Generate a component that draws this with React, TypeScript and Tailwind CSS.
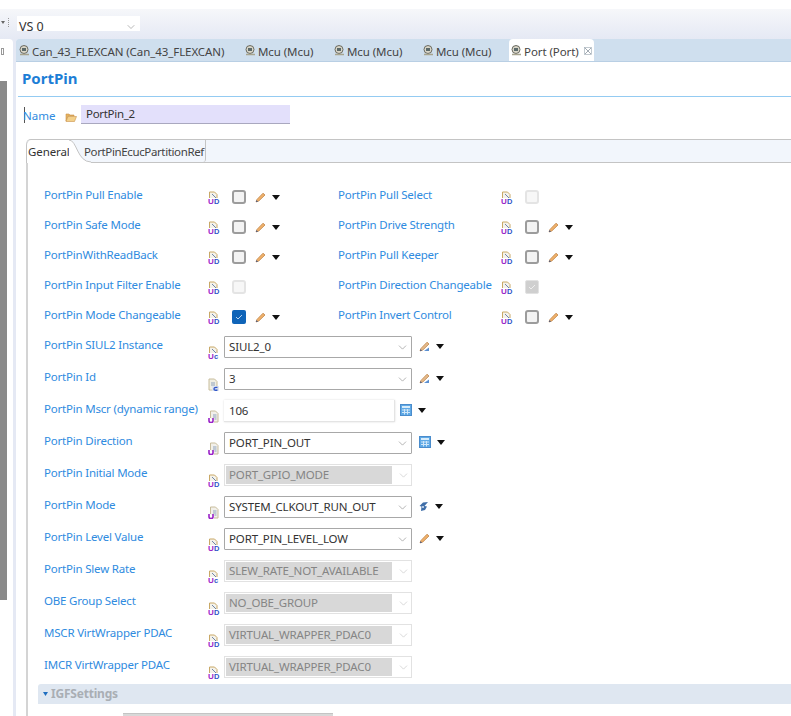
import React from 'react';
import {ChevronDown} from 'lucide-react';

const labelClass = "text-[11.5px] tracking-[-0.2px] leading-[16px] text-[#2f8be0] whitespace-nowrap";

function UdIcon({kind = 'UD'}: { kind?: string }) {
    return (
        <svg width="12" height="13" viewBox="0 0 12 13" className="shrink-0">
            <path d="M1.5 7 V1 H6.5 L9 3.5 V7" fill="#f4f2ea" stroke="#c9a866" strokeWidth="1"/>
            <path d="M4 3 L8 7" stroke="#6f86a8" strokeWidth="1"/>
            <text x="0" y="12.5" fontSize="8" fontWeight="700" fill="#9a22c8" fontFamily="Liberation Sans">{kind[0]}</text>
            <text x="6" y="12.5" fontSize="7.5" fontWeight="700" fill="#2f55c8" fontFamily="Liberation Sans">{kind[1]}</text>
        </svg>
    );
}

function PageIcon({tone = '#9a22c8'}: { tone?: string }) {
    return (
        <svg width="11" height="13" viewBox="0 0 11 13" className="shrink-0">
            <path d="M2.5 8 V1 H7.5 L10 3.5 V12 H6" fill="#f2f0ea" stroke="#c8bd9c" strokeWidth="1"/>
            <path d="M5 5 H8.5 M5 7 H8.5 M6.5 9 H8.5" stroke="#8da2bf" strokeWidth="1"/>
            <path d="M1 8 V11 Q1 12.5 3 12.5 Q5 12.5 5 11 V8" fill="none" stroke={tone} strokeWidth="1.6"/>
        </svg>
    );
}

function IdIcon() {
    return (
        <svg width="11" height="13" viewBox="0 0 11 13" className="shrink-0">
            <path d="M1 12 V1 H6.5 L9 3.5 V8" fill="#f0eee2" stroke="#c8bd9c" strokeWidth="1"/>
            <path d="M1 12 H6" stroke="#c8bd9c" strokeWidth="1"/>
            <path d="M3 5 H7 M3 7 H7" stroke="#8da2bf" strokeWidth="1"/>
            <rect x="4" y="8" width="7" height="5" fill="#dfe6f2"/>
            <path d="M9.5 9.5 Q6 9 6 11 Q6 12.8 9.5 12" fill="none" stroke="#2f55c8" strokeWidth="1.3"/>
        </svg>
    );
}

function Pencil({tint = false}: { tint?: boolean }) {
    return (
        <svg width="11" height="11" viewBox="0 0 11 11" className="shrink-0">
            <path d="M1 10 L2 7.4 L8 1.2 L10 3 L3.8 9 Z" fill={tint ? "#e4b98a" : "#efb06a"} stroke="#b97b3b" strokeWidth="0.7"/>
            <path d="M1 10 L1.6 8.2 L3 9.4 Z" fill="#2d4f8f"/>
            {tint ? <path d="M5 10 H10 V6.5 Z" fill="#5b8fd0"/> : null}
        </svg>
    );
}

function CalcIcon() {
    return (
        <svg width="12" height="12" viewBox="0 0 12 12" className="shrink-0">
            <rect x="0.5" y="0.5" width="11" height="11" fill="#5fa9e6" stroke="#4a8ccc"/>
            <rect x="2" y="2" width="8" height="2" fill="#d7ecfb"/>
            <path d="M2 6 H10 M2 8.5 H10 M4.5 5 V10.5 M7.5 5 V10.5" stroke="#cfe6f8" strokeWidth="1"/>
        </svg>
    );
}

function WandIcon() {
    return (
        <svg width="10" height="11" viewBox="0 0 10 11" className="shrink-0">
            <path d="M9 1 L4 1.5 L0.5 5 L2.5 5.5 L2 10 L6 9 L8 5.5 L5.5 5 Z" fill="#3f6ea8"/>
            <circle cx="4" cy="6" r="1" fill="#dfe9f5"/>
        </svg>
    );
}

function Arrow() {
    return (
        <svg width="8" height="5" viewBox="0 0 8 5" className="shrink-0">
            <path d="M0 0 H8 L4 5 Z" fill="#111"/>
        </svg>
    );
}

function Check({state}: { state: 'off' | 'disabled' | 'on' | 'disabledOn' }) {
    if (state === 'on') {
        return (
            <span className="w-[14px] h-[14px] rounded-[2px] bg-[#0f64b8] flex items-center justify-center shrink-0">
                <svg width="8" height="6" viewBox="0 0 8 6"><path d="M1 3 L3 5 L7 1" fill="none" stroke="#b9d3ee" strokeWidth="1"/></svg>
            </span>
        );
    }
    if (state === 'disabledOn') {
        return (
            <span className="w-[14px] h-[14px] rounded-[2px] bg-[#cfcfcf] border border-[#e2e2e2] flex items-center justify-center shrink-0">
                <svg width="8" height="6" viewBox="0 0 8 6"><path d="M1 3 L3 5 L7 1" fill="none" stroke="#eeeeee" strokeWidth="1"/></svg>
            </span>
        );
    }
    if (state === 'disabled') {
        return <span className="w-[14px] h-[14px] rounded-[3px] bg-[#f7f7f7] border-2 border-[#e4e4e4] shrink-0"/>;
    }
    return <span className="w-[14px] h-[14px] rounded-[3px] bg-[#f3f3f3] border-2 border-[#9c9c9c] shrink-0"/>;
}

type CheckField = { label: string, state: 'off' | 'disabled' | 'on' | 'disabledOn' };

function CheckCell({field, labelW, boxGap}: { field: CheckField, labelW: string, boxGap: string }) {
    const editable = field.state === 'off' || field.state === 'on';
    return (
        <div className="flex items-center">
            <span className={labelClass + " pb-[4px] " + labelW}>{field.label}</span>
            <UdIcon/>
            <div className={"flex items-center " + boxGap}>
                <Check state={field.state}/>
                {editable ?
                    <div className="flex items-center ml-[9px] gap-[6px]">
                        <Pencil/>
                        <Arrow/>
                    </div> : null}
            </div>
        </div>
    );
}

const checkRows: CheckField[][] = [
    [{label: 'PortPin Pull Enable', state: 'off'}, {label: 'PortPin Pull Select', state: 'disabled'}],
    [{label: 'PortPin Safe Mode', state: 'off'}, {label: 'PortPin Drive Strength', state: 'off'}],
    [{label: 'PortPinWithReadBack', state: 'off'}, {label: 'PortPin Pull Keeper', state: 'off'}],
    [{label: 'PortPin Input Filter Enable', state: 'disabled'}, {label: 'PortPin Direction Changeable', state: 'disabledOn'}],
    [{label: 'PortPin Mode Changeable', state: 'on'}, {label: 'PortPin Invert Control', state: 'off'}],
];

type ComboField = { label: string, value: string, icon: React.ReactNode, tool?: React.ReactNode, disabled?: boolean, text?: boolean };

const comboRows: ComboField[] = [
    {label: 'PortPin SIUL2 Instance', value: 'SIUL2_0', icon: <UdIcon kind="Uc"/>, tool: <Pencil tint/>},
    {label: 'PortPin Id', value: '3', icon: <IdIcon/>, tool: <Pencil tint/>},
    {label: 'PortPin Mscr (dynamic range)', value: '106', icon: <PageIcon/>, tool: <CalcIcon/>, text: true},
    {label: 'PortPin Direction', value: 'PORT_PIN_OUT', icon: <PageIcon/>, tool: <CalcIcon/>},
    {label: 'PortPin Initial Mode', value: 'PORT_GPIO_MODE', icon: <UdIcon/>, disabled: true},
    {label: 'PortPin Mode', value: 'SYSTEM_CLKOUT_RUN_OUT', icon: <PageIcon/>, tool: <WandIcon/>},
    {label: 'PortPin Level Value', value: 'PORT_PIN_LEVEL_LOW', icon: <UdIcon/>, tool: <Pencil/>},
    {label: 'PortPin Slew Rate', value: 'SLEW_RATE_NOT_AVAILABLE', icon: <UdIcon kind="Uc"/>, disabled: true},
    {label: 'OBE Group Select', value: 'NO_OBE_GROUP', icon: <UdIcon/>, disabled: true},
    {label: 'MSCR VirtWrapper PDAC', value: 'VIRTUAL_WRAPPER_PDAC0', icon: <UdIcon/>, disabled: true},
    {label: 'IMCR VirtWrapper PDAC', value: 'VIRTUAL_WRAPPER_PDAC0', icon: <UdIcon/>, disabled: true},
];

const valueClass = "text-[11.5px] tracking-[-0.15px] whitespace-nowrap";

function Combo({field}: { field: ComboField }) {
    if (field.text) {
        return (
            <div className={"w-[171px] h-[22px] bg-white border-b border-r border-[#e4e4e4] shadow-[0_0_2px_#dddddd] flex items-center pl-[5px] text-[#333] " + valueClass}>
                {field.value}
            </div>
        );
    }
    if (field.disabled) {
        return (
            <div className="w-[188px] h-[22px] bg-white border border-[#e2e2e2] flex items-center p-[1px]">
                <div className={"w-[166px] h-full bg-[#d8d8d8] flex items-center pl-[3px] text-[#858585] overflow-hidden " + valueClass}>
                    {field.value}
                </div>
                <ChevronDown className="ml-[5px] text-[#c4c4c4]" size={13} strokeWidth={1.2}/>
            </div>
        );
    }
    return (
        <div className={"w-[188px] h-[22px] bg-white border border-[#a8a8a8] rounded-[1px] flex items-center justify-between pl-[4px] pr-[2px] text-[#333] " + valueClass}>
            {field.value}
            <ChevronDown className="text-[#8d8d8d]" size={13} strokeWidth={1.2}/>
        </div>
    );
}

function ComboRow({field}: { field: ComboField }) {
    return (
        <div className="flex items-start h-[32px] shrink-0">
            <span className={labelClass + " w-[164px] pt-[5px]"}>{field.label}</span>
            <div className="w-[16px] pt-[14px]">{field.icon}</div>
            <div className="pt-[4px]">
                <Combo field={field}/>
            </div>
            {field.tool ?
                <div className={"flex items-center gap-[6px] h-[22px] mt-[3px] " + (field.text ? "ml-[5px]" : "ml-[7px]")}>
                    {field.tool}
                    <Arrow/>
                </div> : null}
        </div>
    );
}

function EditorTab({title, width, active}: { title: string, width: string, active?: boolean }) {
    return (
        <div className={"flex items-center h-full shrink-0 pt-[3px] " + width + (active ? " bg-white rounded-t-[4px] pl-[2px]" : "")}>
            <svg width="11" height="11" viewBox="0 0 11 11" className="shrink-0 -mt-[2px]">
                <circle cx="5" cy="4.5" r="4" fill="#d9d6c8" stroke="#6b6b60"/>
                <rect x="3" y="3" width="4" height="3" fill="#5c6a6a"/>
                <path d="M1 9.5 H10" stroke="#a8a58f" strokeWidth="1.5"/>
            </svg>
            <span className="ml-[2px] text-[11.5px] tracking-[-0.08px] text-[#444] whitespace-nowrap">{title}</span>
            {active ?
                <svg width="8" height="8" viewBox="0 0 8 8" className="ml-[5px] shrink-0 -mt-[2px]">
                    <rect x="0.5" y="0.5" width="7" height="7" fill="none" stroke="#a9b4bd" strokeWidth="0.7"/>
                    <path d="M1 1 L7 7 M7 1 L1 7" stroke="#8b969f" strokeWidth="0.8"/>
                </svg> : null}
        </div>
    );
}

function App() {
    return (
        <div className="w-[791px] h-[716px] overflow-hidden flex flex-col bg-white font-['Noto_Sans',sans-serif]">
            <div className="h-[9px] shrink-0 bg-white"/>
            <div className="h-[30px] shrink-0 bg-gradient-to-b from-[#f6f7fa] to-[#e5e9f4] flex items-start">
                <div className="w-[17px] shrink-0 flex items-center h-[30px] pb-[3px] pl-[1px] gap-[3px]">
                    <svg width="4" height="3" viewBox="0 0 4 3"><path d="M0 0 H4 L2 3 Z" fill="#666"/></svg>
                    <span className="w-[1px] h-[9px] border-l border-dotted border-[#999]"/>
                </div>
                <div className="w-[123px] h-[15px] mt-[7px] bg-white flex justify-between overflow-hidden pl-[2px] pr-[3px]">
                    <span className="text-[12.5px] leading-[22px] text-[#333]">VS 0</span>
                    <ChevronDown className="text-[#888] mt-[5px]" size={12} strokeWidth={1.2}/>
                </div>
            </div>

            <div className="flex flex-1 min-h-0 bg-[#e5e9f4]">
                <div className="w-[13px] shrink-0 bg-white rounded-tr-[4px] flex flex-col">
                    <div className="h-[42px] shrink-0 pt-[9px]">
                        <span className="block ml-[1px] w-[3px] h-[7px] border border-[#999]"/>
                    </div>
                    <div className="w-[7px] h-[519px] bg-[#8a8a8a]"/>
                </div>
                <div className="w-[3px] shrink-0"/>

                <div className="flex-1 min-w-0 flex flex-col bg-white rounded-tl-[3px]">
                    <div className="h-[23px] shrink-0 bg-[#cfdfee] border-b border-[#b9cfe4] flex items-stretch pl-[3px] overflow-hidden rounded-tl-[3px]">
                        <EditorTab title="Can_43_FLEXCAN (Can_43_FLEXCAN)" width="w-[226px]"/>
                        <EditorTab title="Mcu (Mcu)" width="w-[89px]"/>
                        <EditorTab title="Mcu (Mcu)" width="w-[89px]"/>
                        <EditorTab title="Mcu (Mcu)" width="w-[86px]"/>
                        <EditorTab title="Port (Port)" width="w-[85px]" active/>
                    </div>

                    <div className="h-[35px] shrink-0 flex items-center pl-[6px] pb-[2px] border-b border-[#94cbf2] ml-[2px] text-[15px] font-bold text-[#1c7ed6] leading-none">
                        <span className="-ml-[2px]">PortPin</span>
                    </div>

                    <div className="h-[42px] shrink-0 flex items-start pt-[8px]">
                        <span className="ml-[8px] w-[1px] h-[16px] mt-[2px] bg-[#555]"/>
                        <span className={labelClass + " leading-[20px] w-[42px] pt-[1px] -ml-[2px] tracking-normal"}>Name</span>
                        <svg width="12" height="10" viewBox="0 0 12 10" className="mt-[7px] shrink-0">
                            <path d="M1 2 H4 L5 3 H9 V4 H3 L1 9 Z" fill="#e5b45f" stroke="#c9924a" strokeWidth="0.6"/>
                            <path d="M3 4.5 H11.5 L9.5 9.5 H1 Z" fill="#f3d08a" stroke="#c9924a" strokeWidth="0.6"/>
                        </svg>
                        <div className="ml-[4px] w-[209px] h-[19px] bg-[#e3e0fb] border-b border-[#a9a8bf] leading-[18px] text-[#333] pl-[5px] text-[11.5px] tracking-[-0.3px] whitespace-nowrap">
                            PortPin_2
                        </div>
                    </div>

                    <div className="flex-1 min-h-0 ml-[10px] flex flex-col">
                        <div className="relative h-[24px] shrink-0 flex items-stretch border-t border-b border-[#c4c4c4] bg-[#f2f6fc] rounded-tl-[5px]">
                            <div className="w-[43px] -mb-[1px] bg-white rounded-tl-[5px] border-l border-[#c4c4c4] text-[11.5px] tracking-[-0.1px] text-[#333] pl-[1px] leading-[24px]">
                                General
                            </div>
                            <svg width="22" height="23" viewBox="0 0 22 23" className="absolute left-[43px] top-0">
                                <path d="M0 0 C8 0 8 22 22 22 V23 H0 Z" fill="#ffffff"/>
                                <path d="M0 0 C8 0 8 22 22 22" fill="none" stroke="#c4c4c4" strokeWidth="1"/>
                            </svg>
                            <div className="relative ml-[15px] w-[122px] border-r border-[#c4c4c4] rounded-br-[3px] text-[11.5px] tracking-[-0.37px] text-[#444] leading-[24px] whitespace-nowrap">
                                PortPinEcucPartitionRef
                            </div>
                        </div>

                        <div className="flex-1 min-h-0 border-l-2 border-[#d4d4d4] pl-[16px] pt-[19px] flex flex-col">
                            {checkRows.map((row, idx) =>
                                <div key={idx} className="flex items-center h-[30px] shrink-0">
                                    <div className="w-[294px] shrink-0">
                                        <CheckCell field={row[0]} labelW="w-[164px]" boxGap="ml-[12px]"/>
                                    </div>
                                    <CheckCell field={row[1]} labelW="w-[163px]" boxGap="ml-[12px]"/>
                                </div>
                            )}
                            {comboRows.map((field, idx) => <ComboRow key={idx} field={field}/>)}

                            <div className="h-[20px] shrink-0 -ml-[6px] bg-[#dfe7f1] rounded-tl-[3px] flex items-center pl-[5px] gap-[3px]">
                                <svg width="5" height="4" viewBox="0 0 5 4"><path d="M0 0 H5 L2.5 4 Z" fill="#1f6fc0"/></svg>
                                <span className="text-[12px] font-bold tracking-[-0.2px] text-[#a9aeb4]">IGFSettings</span>
                            </div>
                            <div className="h-[10px] w-[210px] shrink-0 ml-[79px] mt-[9px] bg-[#d8d8d8] border-t border-[#c4c4c4]"/>
                        </div>
                    </div>
                </div>
            </div>
        </div>
    );
}

export default App;
